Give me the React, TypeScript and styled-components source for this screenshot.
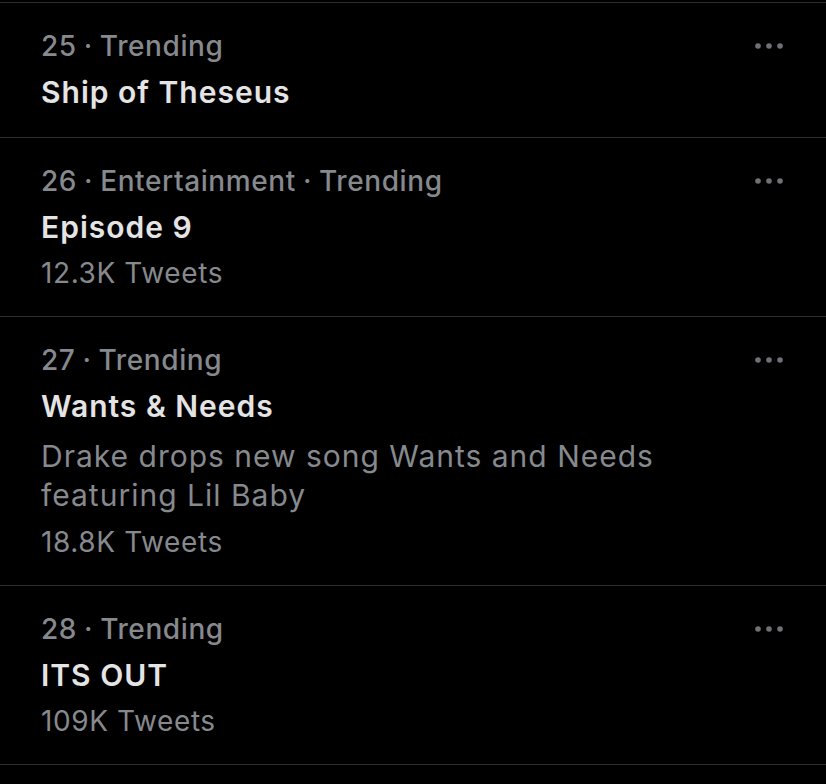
import React from 'react'
import styled, { createGlobalStyle } from 'styled-components'

type Trend = {
	rank: number,
	category?: string,
	title: string,
	description?: string,
	tweets?: string,
}

const trends: Trend[] = [
	{ rank: 25, title: 'Ship of Theseus' },
	{ rank: 26, category: 'Entertainment', title: 'Episode 9', tweets: '12.3K Tweets' },
	{
		rank: 27,
		title: 'Wants & Needs',
		description: 'Drake drops new song Wants and Needs featuring Lil Baby',
		tweets: '18.8K Tweets',
	},
	{ rank: 28, title: 'ITS OUT', tweets: '109K Tweets' },
]

const GlobalStyle = createGlobalStyle`
	html, body {
		margin: 0;
		background: #000;
	}
	body {
		font-family: Inter, 'Noto Sans', sans-serif;
		-webkit-font-smoothing: antialiased;
	}
`

const MoreIcon = () => (
	<svg width="28" height="8" viewBox="0 0 28 8">
		<circle cx="3" cy="4" r="2.8" fill="#6f7175" />
		<circle cx="14" cy="4" r="2.8" fill="#6f7175" />
		<circle cx="25" cy="4" r="2.8" fill="#6f7175" />
	</svg>
)

const TrendRow = ({ trend }: { trend: Trend }) => (
	<Row>
		<Body>
			<Meta>
				{trend.rank}
				<Dot>·</Dot>
				{trend.category && (
					<>
						{trend.category}
						<Dot>·</Dot>
					</>
				)}
				Trending
			</Meta>
			<Title>{trend.title}</Title>
			{trend.description && <Description>{trend.description}</Description>}
			{trend.tweets && <Count>{trend.tweets}</Count>}
		</Body>
		<More>
			<MoreIcon />
		</More>
	</Row>
)

export default function App() {
	return (
		<>
			<GlobalStyle />
			<List>
				{trends.map(t => (
					<TrendRow key={t.rank} trend={t} />
				))}
			</List>
		</>
	)
}

const List = styled.main`
	width: 826px;
	height: 784px;
	padding-top: 2px;
	box-sizing: border-box;
	background: #000;
	& > article:first-child {
		border-top: 1px solid #2c2d30;
	}
`

const Row = styled.article`
	display: flex;
	align-items: flex-start;
	padding: 20px 43px 20px 41px;
	border-bottom: 1px solid #2c2d30;
	&:first-child {
		padding-bottom: 22px;
	}
`

const Body = styled.div`
	flex: 1;
	display: flex;
	flex-direction: column;
`

const Meta = styled.div`
	font-size: 28px;
	line-height: 46px;
	font-weight: 500;
	letter-spacing: 0.6px;
	color: #86898d;
`

const Dot = styled.span`
	margin: 0 7px;
`

const Title = styled.div`
	font-size: 30px;
	line-height: 46px;
	font-weight: 600;
	letter-spacing: 1px;
	color: #e4e4e5;
`

const Description = styled.div`
	margin: 8px 0 4px;
	max-width: 660px;
	font-size: 30px;
	line-height: 39px;
	font-weight: 400;
	letter-spacing: 1px;
	color: #86898d;
`

const Count = styled.div`
	font-size: 28px;
	line-height: 46px;
	font-weight: 400;
	letter-spacing: 0.6px;
	color: #86898d;
`

const More = styled.div`
	display: flex;
	align-items: center;
	height: 46px;
`
